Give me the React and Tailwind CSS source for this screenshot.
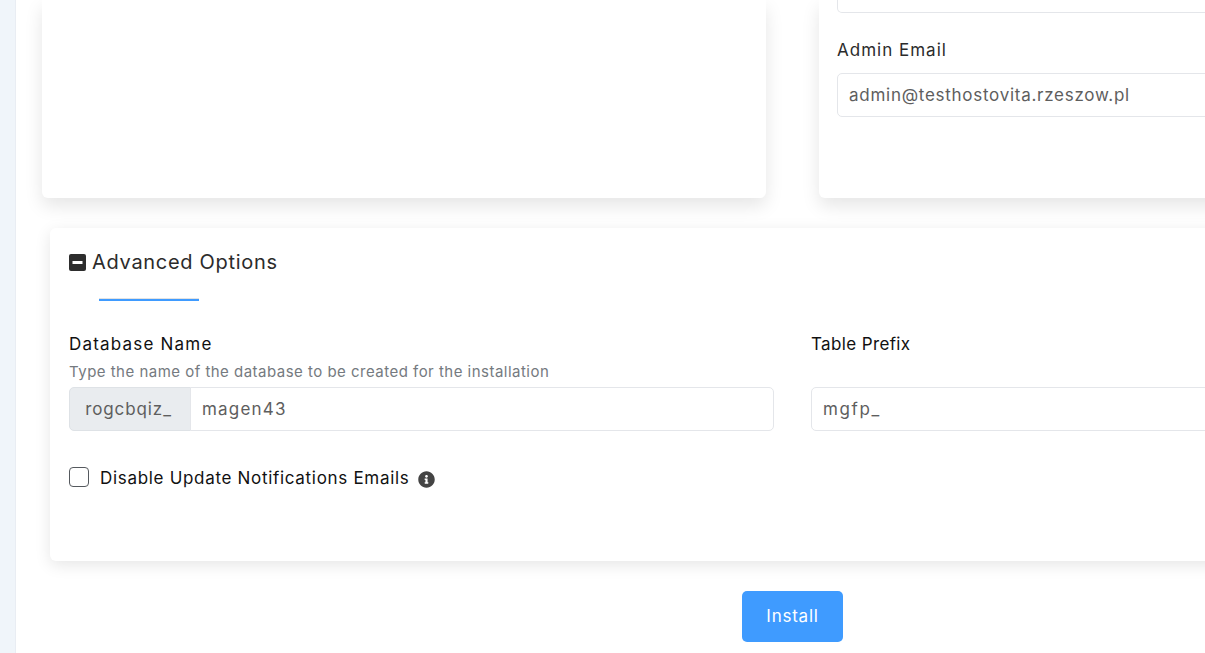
import React from 'react';

function TextBox({ children, className = '' }) {
  return (
    <div className={`h-11 flex items-center px-[11px] pt-[2px] bg-white border border-[#e4e6ea] rounded-[5px] text-[17px] text-[#5e5e5e] ${className}`}>
      {children}
    </div>
  );
}

export default function App() {
  return (
    <div className="h-[653px] w-[1205px] overflow-hidden flex bg-white font-['Inter','Noto_Sans',sans-serif]">
      {/* Sidebar strip */}
      <aside className="w-4 shrink-0 bg-[#f0f5fa] border-r border-[#e9edf3]" />

      <main className="flex-1 min-w-0 flex flex-col">
        {/* Top cards */}
        <div className="flex h-[198px] shrink-0 pl-[26px] gap-[53px]">
          <section className="w-[724px] shrink-0 bg-white rounded-b-[6px] shadow-[0_8px_18px_rgba(0,0,0,0.10)]" />
          <section className="w-[500px] shrink-0 bg-white rounded-bl-[6px] shadow-[0_8px_18px_rgba(0,0,0,0.10)] pl-[18px]">
            <div className="h-[13px] border border-t-0 border-[#e4e6ea] rounded-b-[5px]" />
            <div className="mt-[26px] text-[17px] leading-[22px] tracking-[1px] text-[#2b2b2b]">Admin Email</div>
            <TextBox className="mt-[12px] tracking-[0.73px]">admin@testhostovita.rzeszow.pl</TextBox>
          </section>
        </div>

        {/* Advanced options */}
        <section className="mt-[30px] ml-[34px] w-[1200px] shrink-0 h-[333px] bg-white rounded-l-[6px] shadow-[0_4px_16px_rgba(0,0,0,0.10)] px-[19px]">
          <div className="pt-[22px] flex items-center gap-[6px]">
            <svg width="17" height="17" viewBox="0 0 17 17" className="shrink-0">
              <rect width="17" height="17" rx="2" fill="#2d2d2d" />
              <rect x="3.5" y="7" width="10" height="3" fill="#fff" />
            </svg>
            <h2 className="text-[20px] leading-6 tracking-[0.7px] text-[#2b2b2b]">Advanced Options</h2>
          </div>
          <div className="ml-[30px] mt-[25px] w-[100px] h-[2px] bg-[#3f9bff] shadow-[0_-1px_0_#e2e2e2]" />

          <div className="mt-[32px] flex gap-[37px]">
            <div className="w-[705px] shrink-0">
              <label className="block text-[17px] leading-[22px] tracking-[1.2px] text-[#111]">Database Name</label>
              <p className="mt-[7px] text-[15px] leading-[20px] tracking-[0.48px] text-[#757a80]">Type the name of the database to be created for the installation</p>
              <div className="mt-[5px] flex">
                <div className="h-11 w-[122px] flex items-center justify-center pt-[2px] pr-[3px] bg-[#e9ecef] border border-[#dee2e6] rounded-l-[5px] text-[17px] tracking-[0.9px] text-[#5e5e5e]">rogcbqiz_</div>
                <TextBox className="flex-1 -ml-px rounded-l-none tracking-[1.2px]">magen43</TextBox>
              </div>
            </div>
            <div className="flex-1">
              <label className="block text-[17px] leading-[22px] tracking-[0.37px] text-[#111]">Table Prefix</label>
              <TextBox className="mt-[32px] tracking-[1.6px]">mgfp_</TextBox>
            </div>
          </div>

          <div className="mt-[34px] flex items-center">
            <span className="w-5 h-5 shrink-0 bg-white border border-[#55595e] rounded-[4px]" />
            <span className="ml-[11px] mt-[2px] text-[17px] leading-[22px] tracking-[0.69px] text-[#111]">Disable Update Notifications Emails</span>
            <svg width="17" height="17" viewBox="0 0 512 512" className="ml-[9px] mt-[4px] shrink-0" fill="#444">
              <path d="M256 8C119 8 8 119 8 256s111 248 248 248 248-111 248-248S393 8 256 8zm0 110c23 0 42 19 42 42s-19 42-42 42-42-19-42-42 19-42 42-42zm56 254c0 7-5 12-12 12h-88c-7 0-12-5-12-12v-24c0-7 5-12 12-12h12v-64h-12c-7 0-12-5-12-12v-24c0-7 5-12 12-12h64c7 0 12 5 12 12v100h12c7 0 12 5 12 12v24z" />
            </svg>
          </div>
        </section>

        {/* Submit */}
        <div className="mt-[30px] pl-[726px]">
          <button className="w-[101px] h-[51px] bg-[#3f9bff] rounded-[5px] text-white text-[17px] tracking-[0.75px]">Install</button>
        </div>
      </main>
    </div>
  );
}
